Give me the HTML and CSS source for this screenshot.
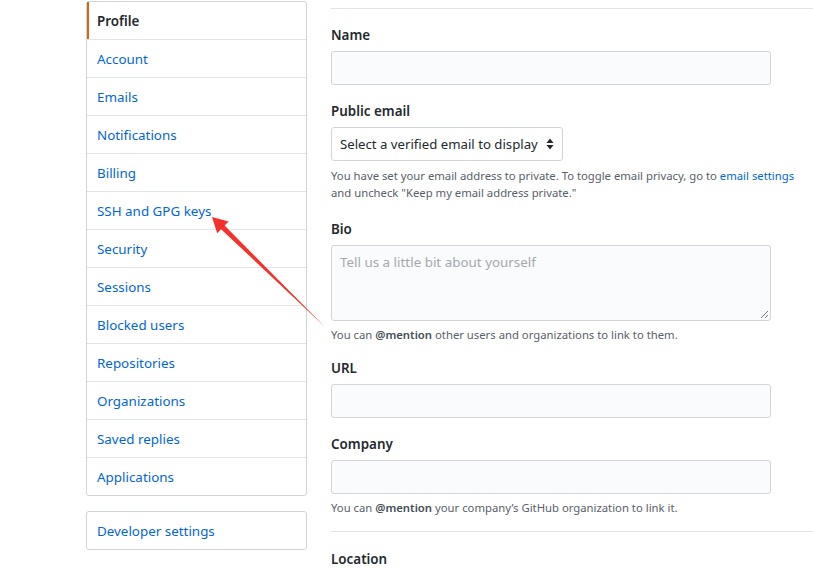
FILE: index.html
```html
<!DOCTYPE html>
<html>
<head>
<meta charset="utf-8">
<link rel="stylesheet" href="styles.css">
</head>
<body>
<div class="page">
  <aside class="side">
    <nav class="menu">
      <a class="item active">Profile</a>
      <a class="item">Account</a>
      <a class="item">Emails</a>
      <a class="item">Notifications</a>
      <a class="item">Billing</a>
      <a class="item">SSH and GPG keys</a>
      <a class="item">Security</a>
      <a class="item">Sessions</a>
      <a class="item">Blocked users</a>
      <a class="item">Repositories</a>
      <a class="item">Organizations</a>
      <a class="item">Saved replies</a>
      <a class="item">Applications</a>
    </nav>
    <nav class="menu dev">
      <a class="item">Developer settings</a>
    </nav>
  </aside>
  <main class="main">
    <hr class="rule top">
    <div class="group">
      <label class="lbl">Name</label>
      <input class="field" type="text">
    </div>
    <div class="group">
      <label class="lbl">Public email</label>
      <div class="select"><span>Select a verified email to display</span><span class="arrows"><svg width="8" height="12" viewBox="0 0 8 12"><path d="M4 0.5 L7.5 5 L0.5 5 Z M0.5 7 L7.5 7 L4 11.5 Z" fill="#24292e"/></svg></span></div>
      <p class="note email">You have set your email address to private. To toggle email privacy, go to <a class="link">email settings</a><br>and uncheck "Keep my email address private."</p>
    </div>
    <div class="group">
      <label class="lbl">Bio</label>
      <div class="area">Tell us a little bit about yourself<svg class="grip" width="9" height="9" viewBox="0 0 9 9"><path d="M1 8 L8 1 M5 8 L8 5" stroke="#777" stroke-width="1"/></svg></div>
      <p class="note bio">You can <b>@mention</b> other users and organizations to link to them.</p>
    </div>
    <div class="group">
      <label class="lbl">URL</label>
      <input class="field" type="text">
    </div>
    <div class="group">
      <label class="lbl">Company</label>
      <input class="field" type="text">
      <p class="note">You can <b>@mention</b> your company’s GitHub organization to link it.</p>
    </div>
    <hr class="rule mid">
    <div class="group loc">
      <label class="lbl">Location</label>
    </div>
  </main>
</div>
<svg class="pointer" width="813" height="570" viewBox="0 0 813 570">
  <polygon points="212,217 228.6,221.6 224.6,225.5 324,326 221.1,229.2 217.2,233.2" fill="#f5312b"/>
</svg>
</body>
</html>
```

FILE: styles.css
```css
html, body {
  margin: 0;
  padding: 0;
  background: #fff;
}
body {
  font-family: "Noto Sans", "Segoe UI", sans-serif;
  font-size: 13.4px;
  color: #24292e;
  position: relative;
  overflow: hidden;
  height: 570px;
}
.page {
  display: flex;
  padding-left: 86px;
  gap: 24px;
}
.side {
  width: 221px;
  flex: none;
  padding-top: 1px;
}
.menu {
  display: flex;
  flex-direction: column;
  border: 1px solid #d1d5da;
  border-radius: 3px;
  background: #fff;
}
.item {
  display: block;
  height: 35px;
  padding-top: 2px;
  line-height: 35px;
  padding-left: 10px;
  color: #0366d6;
  border-top: 1px solid #e1e4e8;
}
.item:first-child {
  border-top: 0;
}
.item.active {
  color: #24292e;
  font-weight: 600;
  border-left: 2px solid #e36209;
  padding-left: 8px;
}
.dev {
  margin-top: 15px;
}
.main {
  flex: 1;
}
.rule {
  border: 0;
  border-top: 1px solid #e1e4e8;
  margin: 0;
}
.rule.top {
  margin-top: 8px;
}
.rule.mid {
  margin-top: 15px;
}
.group {
  margin-top: 16px;
}
.group.loc {
  margin-top: 17px;
}
.lbl {
  display: block;
  font-weight: 600;
  line-height: 20px;
  margin-bottom: 6px;
}
.field {
  display: block;
  box-sizing: border-box;
  width: 440px;
  height: 34px;
  margin: 0;
  background: #fafbfc;
  border: 1px solid #d1d5da;
  border-radius: 3px;
}
.select {
  box-sizing: border-box;
  width: 232px;
  height: 34px;
  border: 1px solid #d1d5da;
  border-radius: 3px;
  padding-left: 8px;
  display: flex;
  align-items: center;
  gap: 8px;
  white-space: nowrap;
  color: #24292e;
  font-size: 13.2px;
}
.arrows {
  display: flex;
}
.note {
  margin: 5px 0 0;
  font-size: 11.3px;
  line-height: 17px;
  color: #586069;
  white-space: nowrap;
}
.note.email {
  margin-top: 6px;
  padding-bottom: 2px;
}
.note.bio {
  margin-bottom: -1px;
}
.note b {
  font-weight: 600;
  color: #444d56;
}
.link {
  color: #0366d6;
}
.area {
  position: relative;
  box-sizing: border-box;
  width: 440px;
  height: 76px;
  background: #fafbfc;
  border: 1px solid #d1d5da;
  border-radius: 3px;
  padding: 6px 8px;
  color: #a3aab1;
  line-height: 20px;
}
.grip {
  position: absolute;
  right: 1px;
  bottom: 1px;
}
.pointer {
  position: absolute;
  left: 0;
  top: 0;
}
```
